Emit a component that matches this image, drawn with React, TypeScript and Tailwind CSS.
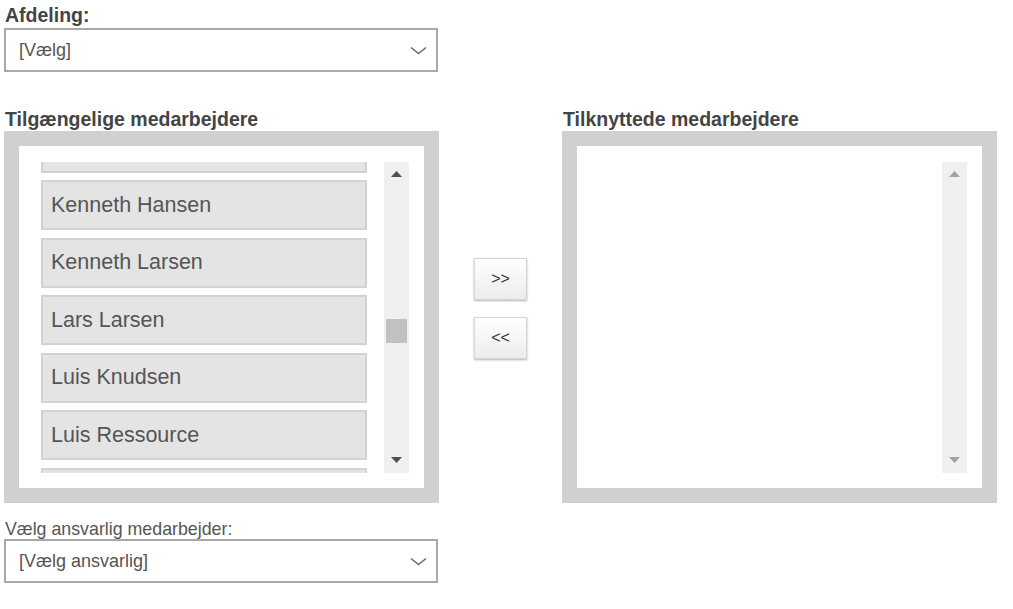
import React from "react";

const font = { fontFamily: '"Liberation Sans", Arial, sans-serif' };

function Chevron() {
  return (
    <svg width="17" height="9" viewBox="0 0 17 9" className="shrink-0">
      <path d="M1 1.5 L8.5 7.5 L16 1.5" fill="none" stroke="#6b6b6b" strokeWidth="1.6" />
    </svg>
  );
}

function Select({ text }: { text: string }) {
  return (
    <div className="box-border flex h-[44px] w-[434px] items-center justify-between border-2 border-[#a9a9a9] bg-white pl-[13px] pr-[9px]">
      <span className="text-[18px] leading-[20px] text-[#555555]">{text}</span>
      <Chevron />
    </div>
  );
}

function Arrow({ dir, color }: { dir: "up" | "down"; color: string }) {
  return (
    <svg width="11" height="6" viewBox="0 0 11 6">
      {dir === "up" ? (
        <path d="M0 6 L5.5 0 L11 6 Z" fill={color} />
      ) : (
        <path d="M0 0 L11 0 L5.5 6 Z" fill={color} />
      )}
    </svg>
  );
}

function Scrollbar({ enabled }: { enabled: boolean }) {
  const c = enabled ? "#505050" : "#a3a3a3";
  return (
    <div className="relative h-[311px] w-[25px] shrink-0 bg-[#f0f0f0]">
      <div className="absolute left-[7px] top-[9px]">
        <Arrow dir="up" color={c} />
      </div>
      {enabled && <div className="absolute left-[2px] top-[157px] h-[24px] w-[21px] bg-[#c1c1c1]" />}
      <div className="absolute bottom-[10px] left-[7px]">
        <Arrow dir="down" color={c} />
      </div>
    </div>
  );
}

const names = ["", "Kenneth Hansen", "Kenneth Larsen", "Lars Larsen", "Luis Knudsen", "Luis Ressource", ""];

function Panel({ children, enabled }: { children?: React.ReactNode; enabled: boolean }) {
  return (
    <div className="box-border h-[372px] w-[435px] border-[15px] border-[#d0d0d0] bg-white">
      <div className="flex pl-[22px] pr-[15px] pt-[16px]">
        <div className="h-[311px] w-[326px] overflow-hidden">{children}</div>
        <div className="w-[17px]" />
        <Scrollbar enabled={enabled} />
      </div>
    </div>
  );
}

function Btn({ label }: { label: string }) {
  return (
    <div className="box-border flex h-[42px] w-[53px] items-center justify-center border border-[#d6d6d6] bg-gradient-to-b from-white to-[#ececec] text-[16px] text-[#333333] shadow-[0_1px_2px_rgba(0,0,0,0.3)]">
      {label}
    </div>
  );
}

export default function App() {
  return (
    <div className="min-h-[609px] w-[1013px] bg-white pl-[4px]" style={font}>
      <div className="h-[28px] pl-[1px] pt-[3px] text-[19.5px] font-bold leading-[24px] text-[#444444]">Afdeling:</div>
      <Select text="[Vælg]" />

      <div className="mt-[35px] flex">
        <div className="flex w-[435px] flex-col">
          <div className="h-[24px] pl-[1px] text-[19.5px] font-bold leading-[24px] text-[#444444]">Tilgængelige medarbejdere</div>
          <Panel enabled>
            <div className="mt-[-39.5px]">
              {names.map((n, i) => (
                <div
                  key={i}
                  className="mb-[7.5px] box-border flex h-[50px] items-center border-2 border-[#d2d2d2] bg-[#e4e4e4] pl-[8px] text-[21.5px] text-[#555555]"
                >
                  {n}
                </div>
              ))}
            </div>
          </Panel>
        </div>
        <div className="flex w-[123px] flex-col items-center pt-[151px]">
          <Btn label=">>" />
          <div className="h-[17px]" />
          <Btn label="<<" />
        </div>
        <div className="flex w-[435px] flex-col">
          <div className="h-[24px] pl-[1px] text-[19.5px] font-bold leading-[24px] text-[#444444]">Tilknyttede medarbejdere</div>
          <Panel enabled={false} />
        </div>
      </div>

      <div className="mt-[16px] h-[20px] pl-[1px] text-[17.8px] leading-[20px] text-[#555555]">Vælg ansvarlig medarbejder:</div>
      <Select text="[Vælg ansvarlig]" />
    </div>
  );
}
